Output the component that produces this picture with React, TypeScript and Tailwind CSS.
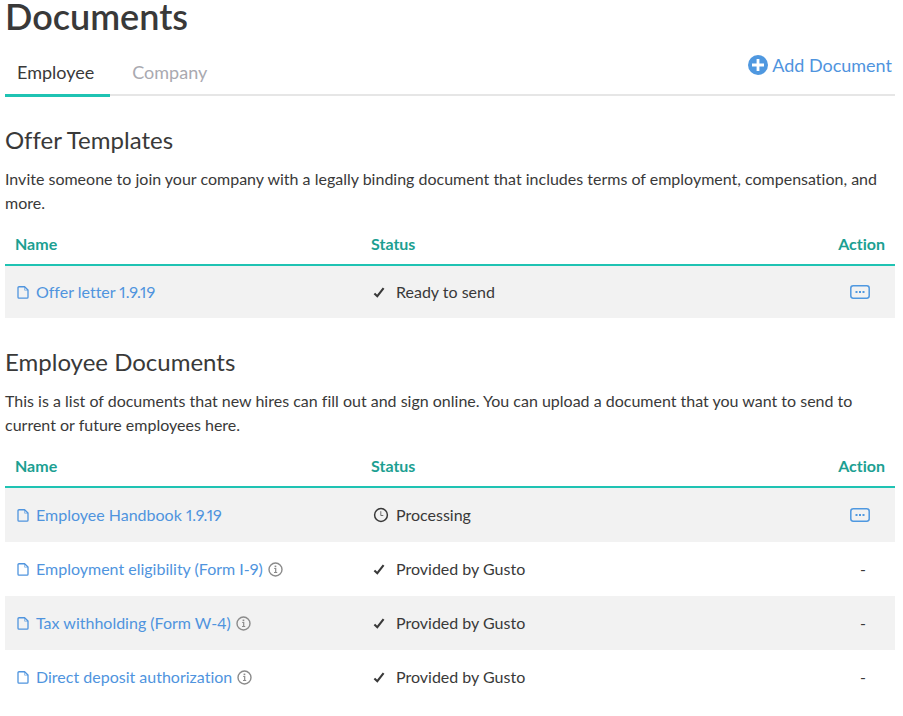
import type { ReactNode } from "react";

type Row = {
  name: string;
  info?: boolean;
  status: string;
  pending?: boolean;
  menu?: boolean;
};

const offerRows: Row[] = [{ name: "Offer letter 1.9.19", status: "Ready to send", menu: true }];

const employeeRows: Row[] = [
  { name: "Employee Handbook 1.9.19", status: "Processing", pending: true, menu: true },
  { name: "Employment eligibility (Form I-9)", info: true, status: "Provided by Gusto" },
  { name: "Tax withholding (Form W-4)", info: true, status: "Provided by Gusto" },
  { name: "Direct deposit authorization", info: true, status: "Provided by Gusto" },
];

function PlusIcon() {
  return (
    <svg width="20" height="20" viewBox="0 0 20 20" aria-hidden="true">
      <circle cx="10" cy="10" r="10" fill="#4f98e0" />
      <path d="M10 4v12M4 10h12" stroke="#fff" strokeWidth="2.8" />
    </svg>
  );
}

function FileIcon() {
  return (
    <svg width="12" height="13" viewBox="0 0 12 13" fill="none" stroke="#4f94de" aria-hidden="true">
      <path d="M2 .75h5.6L11 4v7.2a1 1 0 0 1-1 1H2a1 1 0 0 1-1-1V1.75a1 1 0 0 1 1-1z" strokeWidth="1.3" strokeLinejoin="round" />
      <path d="M7.6 1v3.2H11" strokeWidth="1" opacity=".6" />
    </svg>
  );
}

function CheckIcon() {
  return (
    <svg width="12" height="11" viewBox="0 0 12 11" fill="none" stroke="#393939" aria-hidden="true">
      <path d="M1.4 6.4l2.9 2.8L10.6 1.2" strokeWidth="2.1" />
    </svg>
  );
}

function ClockIcon() {
  return (
    <svg width="16" height="16" viewBox="0 0 16 16" fill="none" stroke="#393939" aria-hidden="true">
      <circle cx="8" cy="8" r="6.4" strokeWidth="1.5" />
      <path d="M7.8 4.2v4.3h2.5" strokeWidth="1" opacity=".7" />
    </svg>
  );
}

function InfoIcon() {
  return (
    <svg width="15" height="15" viewBox="0 0 15 15" fill="none" stroke="#8b8b8b" aria-hidden="true">
      <circle cx="7.5" cy="7.5" r="6.5" strokeWidth="1.4" />
      <path d="M6.2 6.5h1.5v4M6 10.5h3.2" strokeWidth="1.2" />
      <rect x="6.6" y="3.6" width="1.7" height="1.6" fill="#8b8b8b" stroke="none" />
    </svg>
  );
}

function MenuIcon() {
  return (
    <svg width="20" height="14" viewBox="0 0 20 14" fill="none" aria-hidden="true">
      <rect x=".8" y=".8" width="18.4" height="12.4" rx="2.4" stroke="#4f98e0" strokeWidth="1.5" />
      <path d="M5.5 6h2v2h-2zM9 6h2v2H9zM12.5 6h2v2h-2z" fill="#4f98e0" />
    </svg>
  );
}

function DocumentTable({ rows, rowHeight }: { rows: Row[]; rowHeight: string }) {
  return (
    <table className="mt-2 w-full table-fixed border-separate border-spacing-0 text-left">
      <thead>
        <tr className="h-[43px] text-[#1c9f92]">
          <th scope="col" className="w-2/5 border-b-2 border-[#1fc3b3] px-2.5 font-bold">Name</th>
          <th scope="col" className="border-b-2 border-[#1fc3b3] px-2.5 font-bold">Status</th>
          <th scope="col" className="w-28 border-b-2 border-[#1fc3b3] px-2.5 text-right font-bold">Action</th>
        </tr>
      </thead>
      <tbody>
        {rows.map((row) => (
          <tr key={row.name} className={`${rowHeight} odd:bg-[#f2f2f2]`}>
            <td className="px-3">
              <div className="flex items-center gap-[5px]">
                <a href="#" className="flex items-center gap-[7px] text-[#4f94de]">
                  <FileIcon />
                  {row.name}
                </a>
                {row.info && (
                  <button type="button" aria-label={`About ${row.name}`}>
                    <InfoIcon />
                  </button>
                )}
              </div>
            </td>
            <td className="px-3">
              <div className="flex items-center">
                <span className="w-[23px]">{row.pending ? <ClockIcon /> : <CheckIcon />}</span>
                {row.status}
              </div>
            </td>
            <td className="pr-[25px]">
              <div className="flex justify-end">
                {row.menu ? (
                  <button type="button" aria-label={`Actions for ${row.name}`}>
                    <MenuIcon />
                  </button>
                ) : (
                  <span className="pr-1">-</span>
                )}
              </div>
            </td>
          </tr>
        ))}
      </tbody>
    </table>
  );
}

function Section({ title, children }: { title: string; children: ReactNode }) {
  return (
    <section className="mt-7">
      <h2 className="mb-[11px] text-2xl leading-8">{title}</h2>
      {children}
    </section>
  );
}

export default function App() {
  return (
    <main className="bg-white pr-2 pb-3 pl-[5px] font-['Lato',sans-serif] text-base leading-6 text-[#393939] proportional-nums [font-variant-ligatures:none]">
      <h1 className="text-4xl leading-8 font-semibold">Documents</h1>
      <div className="mt-4 flex items-start justify-between border-b-2 border-[#e6e6e6]">
        <nav className="-mb-[3px] flex text-lg leading-6">
          <a href="#" aria-current="page" className="border-b-[3px] border-[#1fc3b3] pt-3 pr-4 pb-2.5 pl-3">Employee</a>
          <a href="#" className="ml-2.5 px-3 pt-3 text-[#a9a9b0]">Company</a>
        </nav>
        <button type="button" className="flex items-center gap-1 pt-[5px] pr-[3px] text-lg leading-6 text-[#4f94de]">
          <PlusIcon />
          Add Document
        </button>
      </div>
      <Section title="Offer Templates">
        <p>
          Invite someone to join your company with a legally binding document that includes terms of employment, compensation, and more.
        </p>
        <DocumentTable rows={offerRows} rowHeight="h-[52px]" />
      </Section>
      <Section title="Employee Documents">
        <p>
          This is a list of documents that new hires can fill out and sign online. You can upload a document that you want to send to current or future employees here.
        </p>
        <DocumentTable rows={employeeRows} rowHeight="h-[54px]" />
      </Section>
    </main>
  );
}
